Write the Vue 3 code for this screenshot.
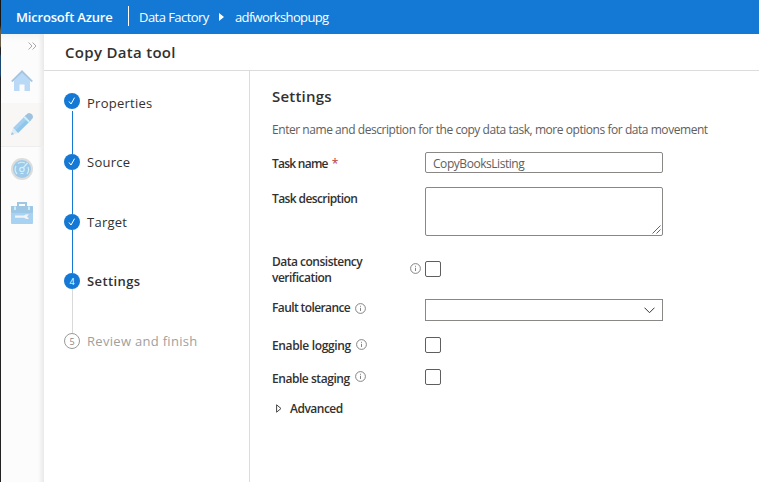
<script setup>
const steps = [
  { label: 'Properties', state: 'done' },
  { label: 'Source', state: 'done' },
  { label: 'Target', state: 'done' },
  { label: 'Settings', state: 'current' },
  { label: 'Review and finish', state: 'todo' },
]
</script>

<template>
  <div class="app">
    <div class="edge"></div>
    <div class="portal">
      <header class="topbar">
        <span class="brand">Microsoft Azure</span>
        <span class="divider"></span>
        <span class="crumb factory">Data Factory</span>
        <svg class="arrow" width="5" height="8" viewBox="0 0 5 8"><path d="M0 0L5 4L0 8Z" fill="#fff" /></svg>
        <span class="crumb workspace">adfworkshopupg</span>
      </header>
      <div class="body">
        <nav class="rail">
          <div class="expand">
            <svg width="9" height="8" viewBox="0 0 9 8" fill="none" stroke="#aaa6a4"><path d="M.6 .5L4 4L.6 7.5M4.6 .5L8 4L4.6 7.5" /></svg>
          </div>
          <div class="tab">
            <svg width="22" height="22" viewBox="0 0 22 22">
              <path d="M0 11L11 0L22 11L20.5 12L11 4L1.5 12Z" fill="#a5c5df" />
              <path d="M3 10.500L11 2.800L19 10.500V21H3Z" fill="#b9d9f7" />
              <path d="M8.5 14.5H13.5V21H8.5Z" fill="#fbfbfb" />
            </svg>
          </div>
          <div class="tab active">
            <svg width="22" height="22" viewBox="0 0 22 22">
              <path d="M2 15L15 2L20 7L7 20Z" fill="#a4cff0" />
              <path d="M4.5 17.5L17.5 4.5L20 7L7 20Z" fill="#91c5ea" />
              <path d="M12.5 4.5L14 3L19 8L17.5 9.5Z" fill="#c9f0fb" />
              <path d="M14 3L16 1Q17 0 18.5 0Q22 1 22 4Q22 5 21 6L19 8Z" fill="#9fc2df" />
              <path d="M2 15L7 20L0 22Z" fill="#dcebf4" />
              <path d="M.9 19L3 21.2L0 22Z" fill="#9bc5e4" />
            </svg>
          </div>
          <div class="tab">
            <svg width="22" height="22" viewBox="0 0 22 22">
              <circle cx="11" cy="11" r="11" fill="#dddddc" />
              <circle cx="11" cy="11" r="9" fill="#9ecaea" />
              <g fill="none" stroke="#d0f0fa" stroke-width="1.2">
                <path d="M6 16A7 7 0 0 1 5 8M7 5.6A7 7 0 0 1 14 5M17 9A7 7 0 0 1 16 16" />
                <circle cx="11" cy="11.5" r="2.2" /><path d="M12.5 9.5L16.5 5M9.5 15.5H12.5" />
              </g>
            </svg>
          </div>
          <div class="tab">
            <svg width="22" height="22" viewBox="0 0 22 22">
              <path d="M7 5V1H15V5" fill="none" stroke="#a0c6e2" stroke-width="2" />
              <rect y="4" width="22" height="18" rx="1" fill="#a8d2f1" />
              <rect y="4" width="22" height="7" rx="1" fill="#9ec7e5" />
              <path d="M3 4.5H5V8H3ZM17 4.5H19V8H17Z" fill="#c8eefa" />
              <path d="M4 13.5H13Q14.5 12 18 12.3L16 14.5L18 16.7Q14.5 17.5 13 15.8H4Z" fill="#f1f3f4" />
            </svg>
          </div>
        </nav>
        <main class="page">
          <h1 class="title">Copy Data tool</h1>
          <div class="content">
            <ol class="steps">
              <li v-for="(s, i) in steps" :key="s.label" class="step" :class="s.state">
                <div class="track">
                  <span class="bullet">
                    <svg v-if="s.state === 'done'" width="8" height="8" viewBox="0 0 8 8" fill="none" stroke="#fff"><path d="M1 4.5L3 7L6.5 .7" /></svg>
                    <span v-else>{{ i + 1 }}</span>
                  </span>
                  <span v-if="i < steps.length - 1" class="line"></span>
                </div>
                <span class="name">{{ s.label }}</span>
              </li>
            </ol>
            <section class="form">
              <h2>Settings</h2>
              <p>Enter name and description for the copy data task, more options for data movement</p>
              <div class="row r-name">
                <label><span class="text">Task name</span><b class="req">*</b></label>
                <div class="input"><span>CopyBooksListing</span></div>
              </div>
              <div class="row r-desc">
                <label><span class="text">Task description</span></label>
                <div class="area">
                  <svg width="9" height="9" viewBox="0 0 9 9" stroke="#555" stroke-width=".9"><path d="M.5 8.5L8.5 .5M4.5 8.5L8.5 4.5" /></svg>
                </div>
              </div>
              <div class="row r-check">
                <label class="wide"><span class="text">Data consistency<br />verification</span>
                  <svg class="info" viewBox="0 0 11 11"><circle cx="5.5" cy="5.5" r="4.9" /><path d="M5.5 4.8V8M5.5 2.8V3.8" /></svg>
                </label>
                <div class="box"></div>
              </div>
              <div class="row r-fault">
                <label><span class="text">Fault tolerance</span>
                  <svg class="info" viewBox="0 0 11 11"><circle cx="5.5" cy="5.5" r="4.9" /><path d="M5.5 4.8V8M5.5 2.8V3.8" /></svg>
                </label>
                <div class="select">
                  <svg width="11" height="7" viewBox="0 0 11 7" fill="none" stroke="#333"><path d="M.5 .7L5.5 5.7L10.5 .7" /></svg>
                </div>
              </div>
              <div class="row r-log">
                <label><span class="text">Enable logging</span>
                  <svg class="info" viewBox="0 0 11 11"><circle cx="5.5" cy="5.5" r="4.9" /><path d="M5.5 4.8V8M5.5 2.8V3.8" /></svg>
                </label>
                <div class="box"></div>
              </div>
              <div class="row r-stage">
                <label><span class="text">Enable staging</span>
                  <svg class="info" viewBox="0 0 11 11"><circle cx="5.5" cy="5.5" r="4.9" /><path d="M5.5 4.8V8M5.5 2.8V3.8" /></svg>
                </label>
                <div class="box"></div>
              </div>
              <div class="advanced">
                <svg width="6" height="9" viewBox="0 0 6 9" fill="none" stroke="#444"><path d="M.6 .8L5 4.5L.6 8.2Z" /></svg>
                <span>Advanced</span>
              </div>
            </section>
          </div>
        </main>
      </div>
    </div>
  </div>
</template>

<style>
body { margin: 0; background: #fff; }
</style>

<style scoped>
* { box-sizing: border-box; }
.app { display: flex; width: 759px; height: 482px; overflow: hidden; font-family: "Open Sans", "Noto Sans", sans-serif; font-size: 12px; color: #323130; white-space: nowrap; }
.edge { width: 1px; background: linear-gradient(#151515 0 25px, #6b5d45 31px 46px, #222 48px 54px, #1b4770 56px 75px, #222 78px); }
.portal { flex: 1; display: flex; flex-direction: column; }
.topbar { height: 34px; background: #1479d5; color: #fff; display: flex; align-items: center; padding-left: 15px; }
.brand { width: 112px; font-size: 13px; font-weight: 600; letter-spacing: -.18px; }
.divider { width: 1px; height: 20px; background: #fff; margin-top: -2px; }
.factory { width: 70px; margin-left: 10px; }
.crumb { font-size: 13px; letter-spacing: -.55px; }
.workspace { letter-spacing: -.65px; }
.arrow { margin: 0 11px 0 10px; }
.body { flex: 1; display: flex; }
.rail { width: 43px; background: linear-gradient(90deg, transparent 37px, #e9e9e9), linear-gradient(#f3f3f3, #fcfcfc 8px); }
.expand { height: 25px; display: flex; justify-content: flex-end; padding: 8px 7px 0 0; }
.tab { height: 44px; display: flex; align-items: center; justify-content: center; padding: 0 1px 1px 0; }
.tab.active { background: linear-gradient(90deg, #f9f7f6 37px, #ebe9e8); border-bottom: 1px solid #eee; }
.page { flex: 1; display: flex; flex-direction: column; }
.title { margin: 0; height: 37px; line-height: 37px; padding-left: 21px; border-bottom: 1px solid #dcdcdc; font-size: 15px; font-weight: 600; letter-spacing: .3px; }
.content { flex: 1; display: flex; }
.steps { list-style: none; margin: 0; padding: 22px 0 0 20px; width: 206px; border-right: 1px solid #dcdcdc; }
.step { height: 60px; display: flex; gap: 7px; }
.step:first-child { height: 61px; }
.step:nth-child(3) { height: 59px; }
.track { width: 16px; display: flex; flex-direction: column; align-items: center; }
.bullet { width: 16px; height: 16px; flex: none; border-radius: 50%; background: #1479d5; color: #fff; display: flex; align-items: center; justify-content: center; font-size: 9px; }
.line { width: 1px; flex: 1; background: #1479d5; }
.step:first-child .line { margin-top: 2px; }
.current .line { background: #d9d9d9; }
.todo .bullet { background: #fff; border: 1px solid #999; color: #888; }
.name { font-size: 13px; line-height: 20px; height: 20px; letter-spacing: .25px; }
.step:not(:first-child) .name { margin-top: -2px; }
.current .name { font-weight: 600; letter-spacing: .4px; }
.todo .name { color: #a19f9d; letter-spacing: .3px; }
.form { padding: 14px 0 0 22px; }
h2 { margin: 0; font-size: 15px; font-weight: 600; line-height: 22px; letter-spacing: .2px; }
p { margin: 13px 0 12px; line-height: 20px; color: #605e5c; letter-spacing: -.45px; }
.row { display: flex; }
label { width: 153px; display: flex; font-weight: 600; line-height: 16px; font-size: 12px; }
.text { letter-spacing: -.5px; }
.r-name .text { letter-spacing: -.75px; }
.r-desc .text, .r-fault .text { letter-spacing: -.6px; }
.r-log .text { letter-spacing: -.35px; }
.r-stage .text { letter-spacing: -.45px; }
.req { color: #b8373c; font-weight: 400; margin-left: 4px; }
.input { width: 238px; height: 21px; border: 1px solid #8a8886; border-radius: 2px; padding-left: 7px; line-height: 21px; color: #605e5c; overflow: hidden; letter-spacing: -.45px; }
.area { width: 238px; height: 49px; border: 1px solid #8a8886; border-radius: 2px; display: flex; justify-content: flex-end; align-items: flex-end; padding: 1px; }
.r-name { height: 35px; }
.r-name label { padding-top: 4px; }
.r-desc { height: 67px; }
.r-desc label { padding-top: 4px; }
.r-check { height: 45px; }
.box { width: 16px; height: 16px; border: 1px solid #605e5c; border-radius: 2px; }
.r-check .box { margin-top: 7px; }
.wide { justify-content: space-between; padding-right: 4px; }
.info { width: 11px; height: 11px; margin: 3px 0 0 5px; fill: none; stroke: #777; stroke-width: .9; flex: none; }
.wide .info { margin-top: 9px; }
.r-fault { height: 38px; }
.r-fault label { padding-top: 1px; }
.select { width: 238px; height: 22px; border: 1px solid #8a8886; display: flex; justify-content: flex-end; align-items: center; padding-right: 7px; }
.r-log { height: 32px; }
.r-log label { padding-top: 1px; }
.r-stage { height: 31px; }
.r-stage label { padding-top: 2px; }
.r-log .info { margin-top: 1px; }
.r-stage .info { margin-top: 0; }
.advanced { display: flex; align-items: center; gap: 8px; padding-left: 4px; height: 16px; font-weight: 600; letter-spacing: -.5px; }
</style>
